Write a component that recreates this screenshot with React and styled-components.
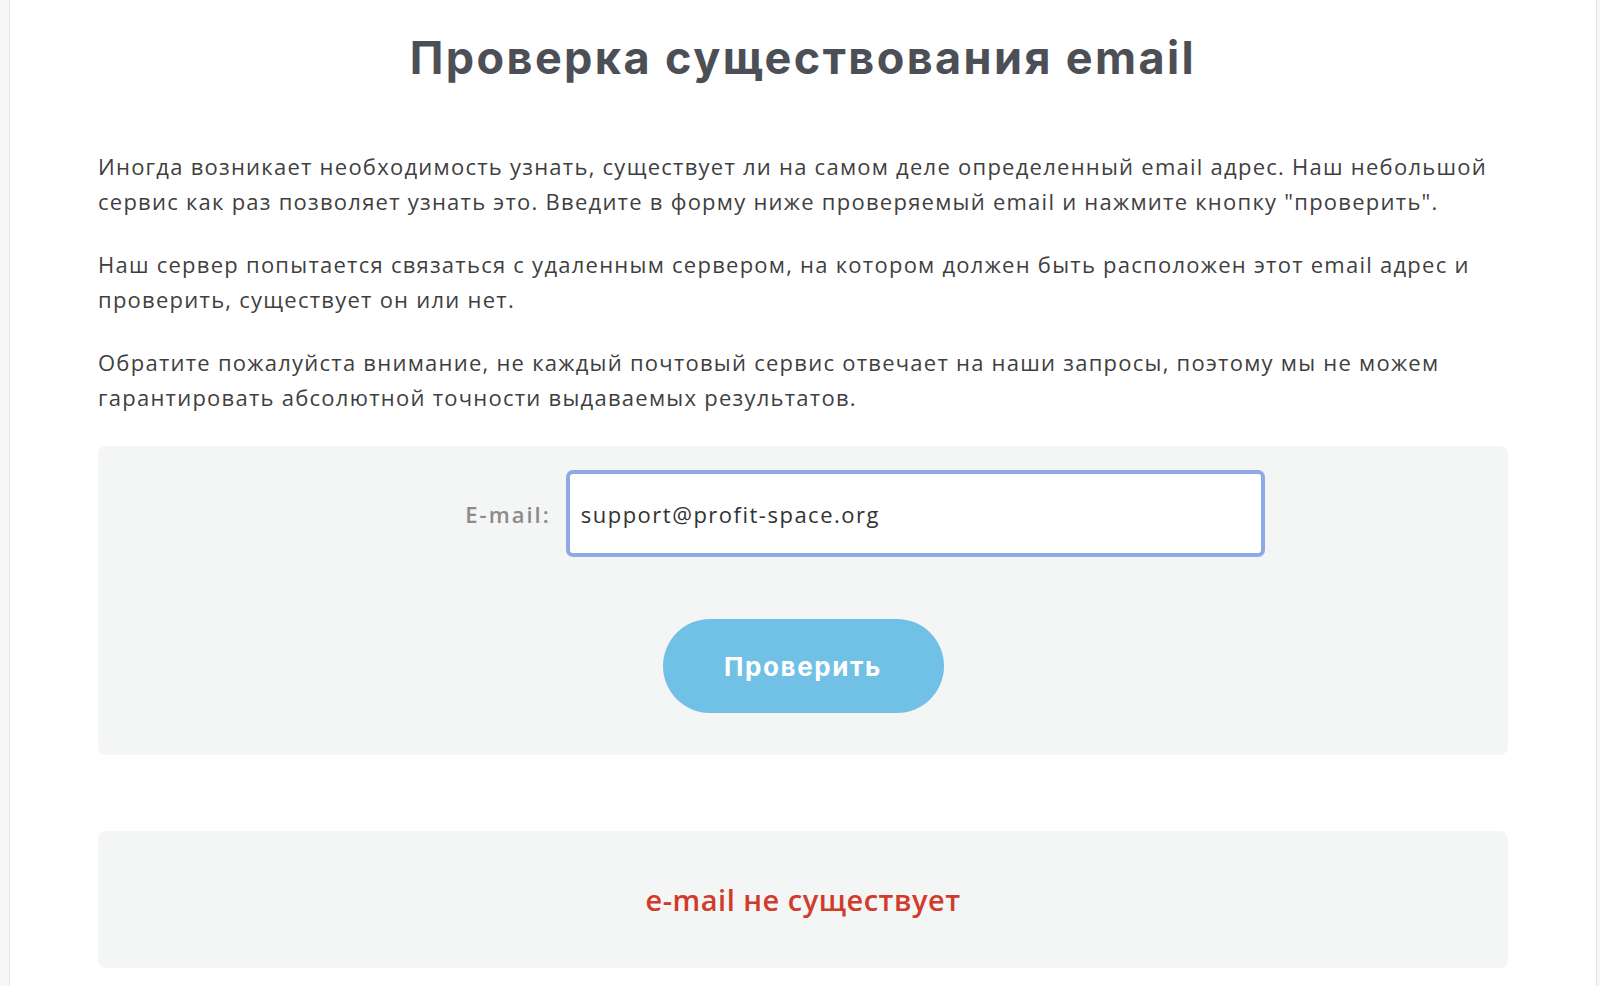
import React from "react";
import styled, { createGlobalStyle } from "styled-components";

const Global = createGlobalStyle`
  html, body { margin: 0; padding: 0; background: #f7f7f8; }
  body { font-family: "Open Sans", "Noto Sans", sans-serif; }
  * { box-sizing: border-box; }
`;

const Page = styled.div`
  margin-left: 9px;
  width: 1588px;
  min-height: 986px;
  background: #ffffff;
  border-left: 1px solid #e6e6e6;
  border-right: 1px solid #e6e6e6;
  padding: 28px 88px 20px 88px;
`;

const Title = styled.h1`
  margin: 0;
  text-align: center;
  font-family: Inter, "Noto Sans", sans-serif;
  font-weight: 700;
  font-size: 45px;
  letter-spacing: 2.4px;
  line-height: 60px;
  color: #4c4f55;
`;

const Text = styled.p`
  margin: ${p => (p.$first ? "61px" : "29px")} 0 0 0;
  font-family: "Open Sans", "Noto Sans", sans-serif;
  font-weight: 500;
  font-size: 22px;
  letter-spacing: 1.25px;
  line-height: 34.5px;
  color: #3f3f3f;
`;

const FormBox = styled.form`
  margin-top: 32px;
  background: #f4f5f5;
  border-radius: 8px;
  height: 309px;
  padding-top: 24px;
  display: flex;
  flex-direction: column;
  align-items: center;
`;

const FieldRow = styled.div`
  display: flex;
  align-items: center;
  gap: 15px;
  margin-left: 124px;
`;

const Label = styled.label`
  font-family: "Open Sans", "Noto Sans", sans-serif;
  font-weight: 600;
  font-size: 22px;
  letter-spacing: 2px;
  color: #8b8b8b;
`;

const Input = styled.input`
  width: 699px;
  height: 87px;
  border: 4px solid #8ea9e6;
  border-radius: 7px;
  background: #fff;
  padding: 0 11px;
  font-family: "Open Sans", "Noto Sans", sans-serif;
  font-weight: 500;
  font-size: 22px;
  letter-spacing: 1.5px;
  color: #333;
  outline: none;
`;

const Button = styled.button`
  margin-top: 62px;
  width: 281px;
  height: 94px;
  border: none;
  border-radius: 47px;
  background: #71c0e6;
  color: #fff;
  font-family: Inter, "Noto Sans", sans-serif;
  font-weight: 700;
  font-size: 26px;
  letter-spacing: 1.6px;
  cursor: pointer;
`;

const ResultBox = styled.div`
  margin-top: 76px;
  background: #f4f5f5;
  border-radius: 8px;
  height: 137px;
  display: flex;
  align-items: center;
  justify-content: center;
`;

const ResultText = styled.span`
  font-family: "Open Sans", "Noto Sans", sans-serif;
  font-weight: 600;
  font-size: 29px;
  letter-spacing: 0.5px;
  color: #d13b2b;
`;

export default function App() {
  return (
    <>
      <Global />
      <Page>
        <Title>Проверка существования email</Title>
        <Text $first>
          Иногда возникает необходимость узнать, существует ли на самом деле определенный email адрес. Наш небольшой
          сервис как раз позволяет узнать это. Введите в форму ниже проверяемый email и нажмите кнопку "проверить".
        </Text>
        <Text>
          Наш сервер попытается связаться с удаленным сервером, на котором должен быть расположен этот email адрес и
          проверить, существует он или нет.
        </Text>
        <Text>
          Обратите пожалуйста внимание, не каждый почтовый сервис отвечает на наши запросы, поэтому мы не можем
          гарантировать абсолютной точности выдаваемых результатов.
        </Text>
        <FormBox onSubmit={e => e.preventDefault()}>
          <FieldRow>
            <Label htmlFor="email">E-mail:</Label>
            <Input id="email" type="text" defaultValue="support@profit-space.org" />
          </FieldRow>
          <Button type="submit">Проверить</Button>
        </FormBox>
        <ResultBox>
          <ResultText>e-mail не существует</ResultText>
        </ResultBox>
      </Page>
    </>
  );
}
